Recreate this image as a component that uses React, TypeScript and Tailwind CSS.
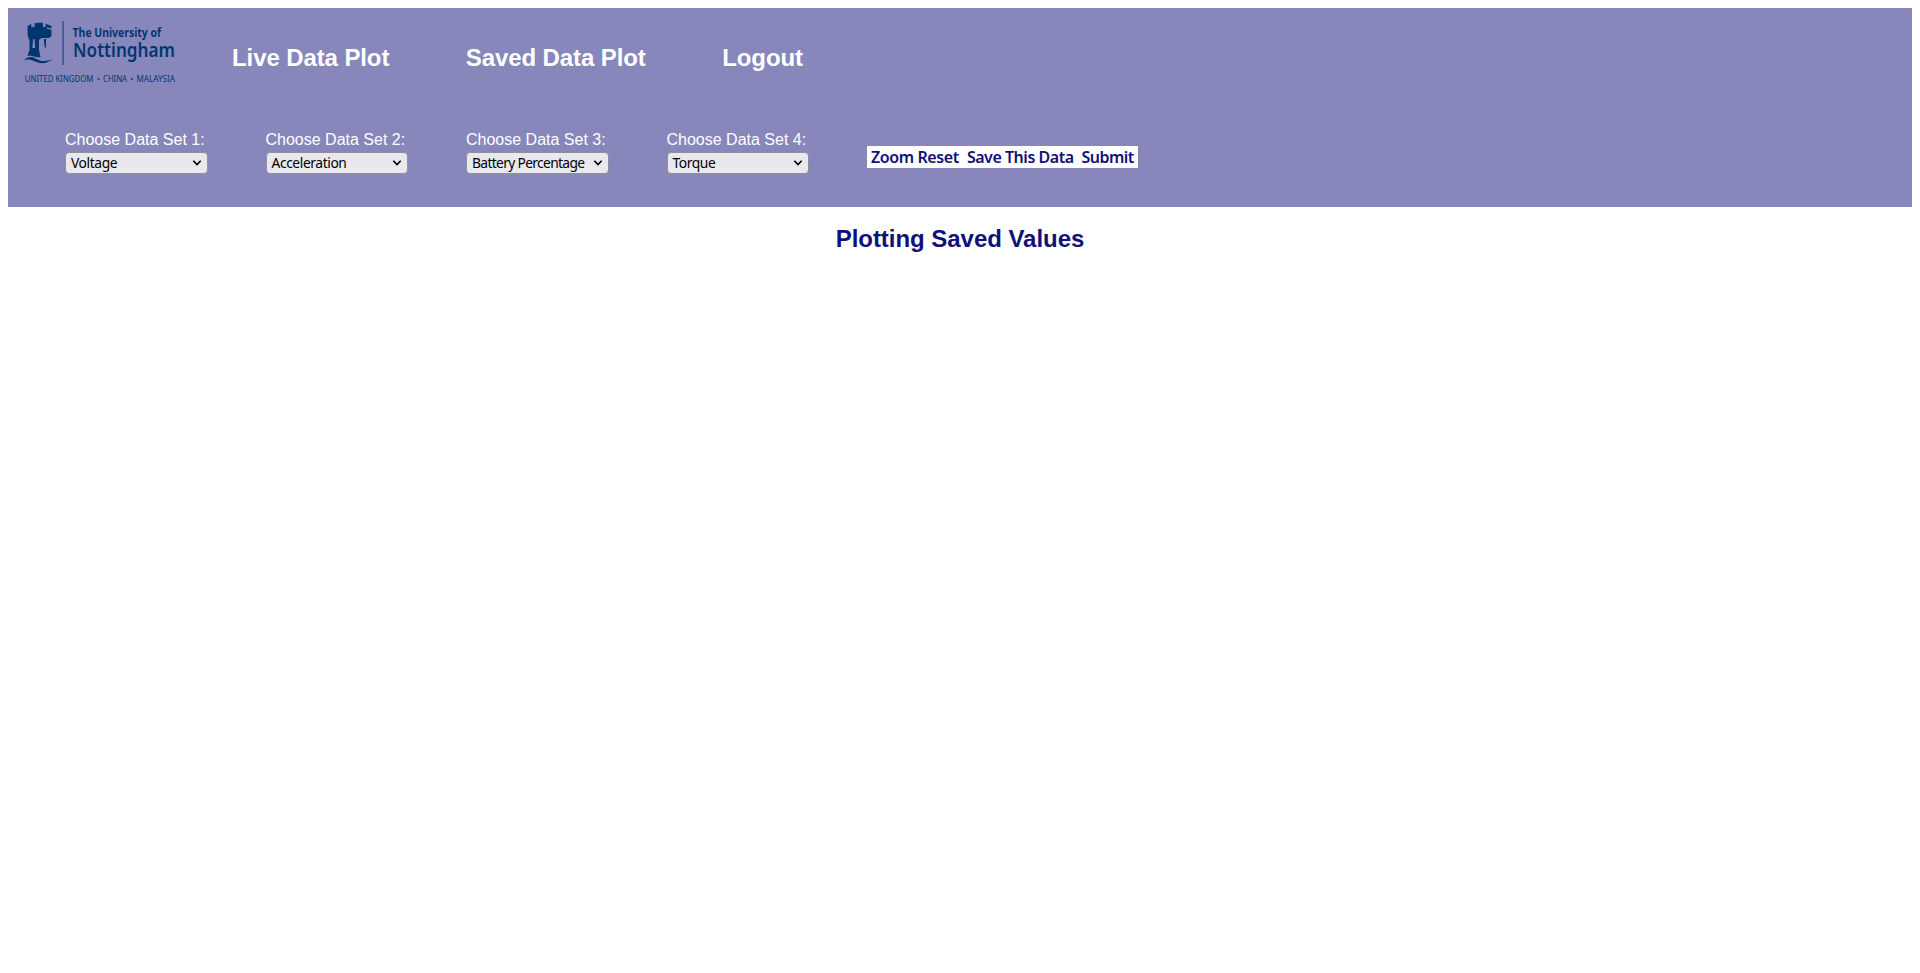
import { ReactNode } from "react";

const dataSets = [
  { label: "Choose Data Set 1:", value: "Voltage", tracking: "tracking-[-0.4px]" },
  { label: "Choose Data Set 2:", value: "Acceleration", tracking: "tracking-[-0.4px]" },
  { label: "Choose Data Set 3:", value: "Battery Percentage", tracking: "tracking-[-0.66px]" },
  { label: "Choose Data Set 4:", value: "Torque", tracking: "tracking-[-0.4px]" },
];

function Logo() {
  return (
    <svg width="156" height="74" viewBox="20 16 156 74" fill="#00366f" className="shrink-0 overflow-visible">
      <path d="M27.5 26L31.3 24V27H34.5V23.4L37.5 22.8H43V27H45.6V23.8L51.5 26V28.6L46.8 27.2V28.4L51.5 30V35.2Q50.8 38 47.5 38H41.5L39 40V50L40.5 57Q36 57.5 32 56Q29.5 55.2 27.3 56L29.5 50V40.5L27.8 36Z" />
      <path d="M43.8 39H46V47.5H44.8Z" />
      <path d="M33 39.2H34.6L35.2 48H32.4Z" fill="#8787bb" />
      <path d="M23.5 60.6Q29 55 35.5 58.4Q44 63.5 52.6 59Q44.5 66 34.5 61.2Q29 58.2 23.5 60.6Z" />
      <rect x="62.4" y="21" width="1.4" height="44" opacity=".65" />
      <g fontFamily="'Noto Sans', sans-serif">
        <text x="72.6" y="36.8" fontSize="12" fontWeight="700" textLength="88.5" lengthAdjust="spacingAndGlyphs">The University of</text>
        <text x="73" y="56.7" fontSize="20.5" fontWeight="600" textLength="102" lengthAdjust="spacingAndGlyphs">Nottingham</text>
        <text x="24.8" y="81.7" fontSize="9" textLength="68.6" lengthAdjust="spacingAndGlyphs">UNITED KINGDOM</text>
        <text x="103" y="81.7" fontSize="9" textLength="24" lengthAdjust="spacingAndGlyphs">CHINA</text>
        <text x="136.5" y="81.7" fontSize="9" textLength="38.3" lengthAdjust="spacingAndGlyphs">MALAYSIA</text>
      </g>
      <circle cx="98.5" cy="79" r="1" />
      <circle cx="131.8" cy="79" r="1" />
    </svg>
  );
}

function NavLink({ children }: { children: ReactNode }) {
  return <a href="#" className="text-2xl leading-7 font-bold tracking-[-0.1px] whitespace-nowrap text-white">{children}</a>;
}

function DataSelect({ label, value, tracking }: { label: string; value: string; tracking: string }) {
  return (
    <div className="w-[142.5px]">
      <div className="text-base leading-[18px] whitespace-nowrap text-white">{label}</div>
      <button className={`mt-[3px] flex h-[22px] w-[142.5px] items-center justify-between rounded-[4px] border border-[#8f8f9d] bg-[#e9e9ed] pr-[5px] pl-[5px] font-['Noto_Sans',sans-serif] text-[13.8px] whitespace-nowrap text-black ${tracking}`}>
        {value}
        <svg width="10" height="8" viewBox="0 0 10 8" fill="none" stroke="black" strokeWidth="1.6" className="shrink-0">
          <path d="M1.3 1.8L5 5.6L8.7 1.8" />
        </svg>
      </button>
    </div>
  );
}

export default function App() {
  return (
    <main className="p-2 font-['Liberation_Sans',Arial,sans-serif]">
      <header className="h-[199px] bg-[#8787bb]">
        <nav className="flex h-[98px] items-start pt-2 pl-3">
          <Logo />
          <div className="mt-[28px] ml-14 flex gap-[76.5px]">
            <NavLink>Live Data Plot</NavLink>
            <NavLink>Saved Data Plot</NavLink>
            <NavLink>Logout</NavLink>
          </div>
        </nav>
        <div className="flex gap-[58px] pt-[25px] pl-[57px]">
          {dataSets.map((d) => <DataSelect key={d.label} {...d} />)}
          <div className="mt-[15px] flex h-[22px] items-center gap-2 bg-white px-1 font-['Noto_Sans',sans-serif] text-base font-semibold whitespace-nowrap text-[#101078]">
            <button className="tracking-[-0.4px]">Zoom Reset</button>
            <button className="tracking-[-0.47px]">Save This Data</button>
            <button className="tracking-[-0.55px]">Submit</button>
          </div>
        </div>
      </header>
      <h1 className="mt-[18px] text-center text-2xl leading-7 font-bold tracking-[-0.04px] text-[#101078]">Plotting Saved Values</h1>
    </main>
  );
}
